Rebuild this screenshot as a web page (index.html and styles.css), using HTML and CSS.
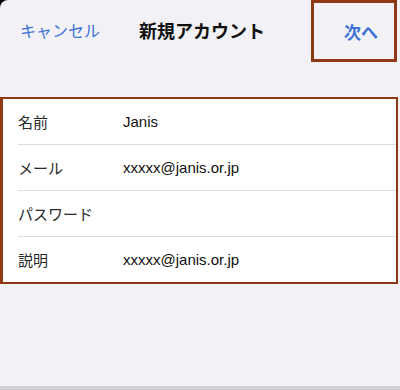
FILE: index.html
```html
<!DOCTYPE html>
<html lang="ja">

<head>
  <meta charset="UTF-8">
  <meta name="viewport" content="width=device-width, initial-scale=1.0">
  <title>新規アカウント</title>
  <link rel="stylesheet" href="styles.css">
</head>

<body>
  <div class="sheet">

    <header class="nav-bar">
      <button class="nav-btn cancel">キャンセル</button>
      <h1 class="nav-title">新規アカウント</h1>
      <button class="nav-btn next">次へ</button>
    </header>

    <div class="form">
      <div class="form-row">
        <span class="form-label">名前</span>
        <span class="form-value">Janis</span>
      </div>
      <div class="form-row">
        <span class="form-label">メール</span>
        <span class="form-value">xxxxx@janis.or.jp</span>
      </div>
      <div class="form-row">
        <span class="form-label">パスワード</span>
        <span class="form-value"></span>
      </div>
      <div class="form-row">
        <span class="form-label">説明</span>
        <span class="form-value">xxxxx@janis.or.jp</span>
      </div>
    </div>

    <div class="home-bar"></div>
  </div>
</body>

</html>
```

FILE: styles.css
```css
*,
*::before,
*::after {
  box-sizing: border-box;
}

html {
  background: #000;
}

body {
  margin: 0;
  font-family: "Liberation Sans", "Noto Sans CJK JP", sans-serif;
}

.sheet {
  display: flex;
  flex-direction: column;
  height: 390px;
  background: #f2f1f6;
  border-top-left-radius: 8px;
}

.nav-bar {
  display: grid;
  grid-template-columns: 1fr auto 1fr;
  align-items: center;
  height: 62px;
}

.nav-btn {
  font-family: inherit;
  font-size: 16px;
  color: #3c72d6;
  border: none;
  background: none;
  padding: 0;
  cursor: pointer;
}

.cancel {
  justify-self: start;
  margin-left: 20px;
  margin-top: -3px;
}

.nav-title {
  margin: -3px 0 0 4px;
  font-size: 18px;
  font-weight: 700;
  color: #111;
}

.next {
  justify-self: end;
  align-self: start;
  width: 86px;
  height: 62px;
  margin-right: 3px;
  padding-left: 14px;
  font-size: 17px;
  font-weight: 700;
  border: 3px solid #8d3a14;
}

.form {
  margin: 35px 2px 0 0;
  background: #fff;
  border: 2px solid #8d3a14;
  border-left-width: 3px;
}

.form-row {
  display: flex;
  align-items: center;
  height: 46px;
  margin-left: 15px;
  border-bottom: 1px solid #dddde0;
  font-size: 15px;
}

.form-row:last-child {
  height: 45px;
  border-bottom: none;
}

.form-label {
  width: 105px;
  color: #2a2a2a;
}

.form-value {
  color: #111;
}

.home-bar {
  margin-top: auto;
  height: 4px;
  background: #cfcfd4;
}
```
